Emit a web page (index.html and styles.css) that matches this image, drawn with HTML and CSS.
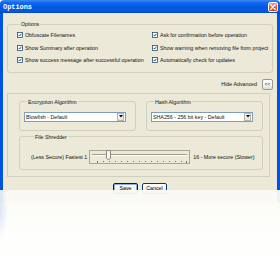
FILE: index.html
```html
<!DOCTYPE html>
<html>
<head>
<meta charset="utf-8">
<link rel="stylesheet" href="styles.css">
</head>
<body>
<div class="window">
  <div class="titlebar">
    <span class="title">Options</span>
    <span class="close"><svg width="6" height="6" viewBox="0 0 6 6"><path d="M0.8 0.8 L5.2 5.2 M5.2 0.8 L0.8 5.2" stroke="#fff" stroke-width="1.3" stroke-linecap="round"/></svg></span>
  </div>
  <div class="client">
    <fieldset class="group options">
      <legend>Options</legend>
      <div class="checks">
        <label class="check"><svg class="cb" viewBox="0 0 12 12"><rect x="1" y="1" width="10" height="10" fill="#fff" stroke="#1c5180" stroke-width="1.6"/><path d="M3.2 5.8 L5.2 8 L8.8 3.6" fill="none" stroke="#2a2a2a" stroke-width="1.7"/></svg><span>Obfuscate Filenames</span></label>
        <label class="check"><svg class="cb" viewBox="0 0 12 12"><rect x="1" y="1" width="10" height="10" fill="#fff" stroke="#1c5180" stroke-width="1.6"/><path d="M3.2 5.8 L5.2 8 L8.8 3.6" fill="none" stroke="#2a2a2a" stroke-width="1.7"/></svg><span>Ask for confirmation before operation</span></label>
        <label class="check"><svg class="cb" viewBox="0 0 12 12"><rect x="1" y="1" width="10" height="10" fill="#fff" stroke="#1c5180" stroke-width="1.6"/><path d="M3.2 5.8 L5.2 8 L8.8 3.6" fill="none" stroke="#2a2a2a" stroke-width="1.7"/></svg><span>Show Summary after operation</span></label>
        <label class="check"><svg class="cb" viewBox="0 0 12 12"><rect x="1" y="1" width="10" height="10" fill="#fff" stroke="#1c5180" stroke-width="1.6"/><path d="M3.2 5.8 L5.2 8 L8.8 3.6" fill="none" stroke="#2a2a2a" stroke-width="1.7"/></svg><span>Show warning when removing file from project</span></label>
        <label class="check"><svg class="cb" viewBox="0 0 12 12"><rect x="1" y="1" width="10" height="10" fill="#fff" stroke="#1c5180" stroke-width="1.6"/><path d="M3.2 5.8 L5.2 8 L8.8 3.6" fill="none" stroke="#2a2a2a" stroke-width="1.7"/></svg><span>Show success message after successful operation</span></label>
        <label class="check"><svg class="cb" viewBox="0 0 12 12"><rect x="1" y="1" width="10" height="10" fill="#fff" stroke="#1c5180" stroke-width="1.6"/><path d="M3.2 5.8 L5.2 8 L8.8 3.6" fill="none" stroke="#2a2a2a" stroke-width="1.7"/></svg><span>Automatically check for updates</span></label>
      </div>
    </fieldset>
    <div class="adv-row">
      <span>Hide Advanced</span>
      <span class="btn small">&lt;&lt;</span>
    </div>
    <div class="panel">
      <div class="algos">
        <fieldset class="group algo">
          <legend>Encryption Algorithm</legend>
          <div class="select"><span class="val">Blowfish - Default</span><span class="arrow"><svg width="4" height="3" viewBox="0 0 4 3"><path d="M0 0 H4 L2 2.5 Z" fill="#000"/></svg></span></div>
        </fieldset>
        <fieldset class="group algo">
          <legend>Hash Algorithm</legend>
          <div class="select"><span class="val">SHA256 - 256 bit key - Default</span><span class="arrow"><svg width="4" height="3" viewBox="0 0 4 3"><path d="M0 0 H4 L2 2.5 Z" fill="#000"/></svg></span></div>
        </fieldset>
      </div>
      <fieldset class="group shredder">
        <legend>File Shredder</legend>
        <div class="slider-row">
          <span class="lbl">(Less Secure) Fastest 1</span>
          <svg class="slider" width="101" height="14" viewBox="0 0 101 14">
            <rect x="0.5" y="0.5" width="100" height="13" fill="none" stroke="#a7a69a"/>
            <line x1="3" y1="4.5" x2="98" y2="4.5" stroke="#9d9c91"/>
            <line x1="3" y1="5.5" x2="98" y2="5.5" stroke="#fff"/>
            <g stroke="#6f6f6f">
              <line x1="8.5" y1="11" x2="8.5" y2="13"/><line x1="14.5" y1="11" x2="14.5" y2="12"/><line x1="20.5" y1="11" x2="20.5" y2="12"/><line x1="26.5" y1="11" x2="26.5" y2="12"/><line x1="32.5" y1="11" x2="32.5" y2="12"/><line x1="38.5" y1="11" x2="38.5" y2="12"/><line x1="44.5" y1="11" x2="44.5" y2="12"/><line x1="50.5" y1="11" x2="50.5" y2="12"/><line x1="56.5" y1="11" x2="56.5" y2="12"/><line x1="62.5" y1="11" x2="62.5" y2="12"/><line x1="68.5" y1="11" x2="68.5" y2="12"/><line x1="74.5" y1="11" x2="74.5" y2="12"/><line x1="80.5" y1="11" x2="80.5" y2="12"/><line x1="86.5" y1="11" x2="86.5" y2="12"/><line x1="92.5" y1="11" x2="92.5" y2="12"/><line x1="97.5" y1="11" x2="97.5" y2="13"/>
            </g>
            <path d="M17.5 0.5 H21.5 V8 L19.5 10 L17.5 8 Z" fill="#f4f3ee" stroke="#8a8a80"/>
            <line x1="18.5" y1="2" x2="18.5" y2="8" stroke="#fff"/>
          </svg>
          <span class="lbl">16 - More secure (Slower)</span>
        </div>
      </fieldset>
    </div>
    <div class="buttons">
      <span class="btn default">Save</span>
      <span class="btn">Cancel</span>
    </div>
  </div>
</div>
<div class="fade"></div>
</body>
</html>
```
FILE: styles.css
```css
html, body {
  margin: 0;
  padding: 0;
}
body {
  width: 280px;
  height: 270px;
  overflow: hidden;
  background: #fff;
  position: relative;
  font-family: "Liberation Sans", Arial, sans-serif;
  font-size: 5.3px;
  color: #111;
}
.window {
  width: 280px;
}
.titlebar {
  height: 13px;
  box-sizing: border-box;
  display: flex;
  align-items: center;
  justify-content: space-between;
  padding: 0 2px 0 3px;
  background: linear-gradient(#3d8cf7 0%, #1667ea 20%, #0058e6 55%, #0a5ad8 85%, #0048c6 100%);
  border-radius: 4px 4px 0 0;
}
.title {
  font-family: "Liberation Mono", monospace;
  font-weight: bold;
  font-size: 6.9px;
  color: #fff;
}
.close {
  width: 10px;
  height: 10px;
  box-sizing: border-box;
  border: 1px solid #fff;
  border-radius: 2px;
  background: linear-gradient(#f39a7a, #e35a34 55%, #cc4420);
  display: flex;
  align-items: center;
  justify-content: center;
}
.client {
  background: #ece9d8;
  border-left: 3px solid #0053e0;
  border-right: 3px solid #0053e0;
  height: 190px;
  box-sizing: border-box;
  padding-top: 8px;
}
.group {
  margin: 0;
  border: 1px solid #d0d0bf;
  border-radius: 3px;
  min-width: 0;
}
.group legend {
  padding: 0 1px;
  margin-left: 3px;
  line-height: 6px;
  height: 6px;
  font-size: 5.3px;
}
.options {
  margin: 0 4px 0 4px;
  padding: 2px 4px 5px 9px;
}
.checks {
  display: grid;
  grid-template-columns: 135px 1fr;
  grid-auto-rows: 12.5px;
}
.check {
  display: flex;
  align-items: center;
  gap: 2px;
  white-space: nowrap;
}
.cb {
  width: 6px;
  height: 6px;
  flex: none;
}
.adv-row {
  margin: 6px 4px 0 0;
  height: 11px;
  display: flex;
  align-items: center;
  justify-content: flex-end;
  gap: 5px;
}
.btn {
  display: inline-flex;
  align-items: center;
  justify-content: center;
  box-sizing: border-box;
  border: 1px solid #003c74;
  border-radius: 2px;
  background: linear-gradient(#ffffff, #f4f3ee 60%, #dcd9cc);
  font-size: 5.3px;
  color: #000;
}
.btn.small {
  width: 11px;
  height: 11px;
  border-color: #9a9a90;
  font-size: 4.5px;
}
.panel {
  margin: 3px 7px 0 4px;
  border: 1px solid #d0d0bf;
  padding: 5px 6px 6px 11px;
}
.algos {
  display: flex;
  gap: 10px;
}
.algo {
  width: 117px;
  box-sizing: border-box;
  padding: 7px 4px 8px 4px;
}
.select {
  width: 102px;
  height: 10px;
  box-sizing: border-box;
  border: 1px solid #7f9db9;
  background: #fff;
  display: flex;
  align-items: center;
  justify-content: space-between;
  padding: 0 1px 0 1px;
}
.val {
  white-space: nowrap;
}
.arrow {
  width: 7px;
  height: 8px;
  box-sizing: border-box;
  border: 1px solid #b5b3a8;
  background: linear-gradient(#fbfbf8, #e6e4da);
  display: flex;
  align-items: center;
  justify-content: center;
}
.shredder {
  margin-top: 3px;
  padding: 10px 4px 5px 11px;
}
.slider-row {
  display: flex;
  align-items: center;
  height: 14px;
}
.slider-row .lbl {
  white-space: nowrap;
}
.slider {
  flex: none;
  margin: 0 3px 0 2px;
  display: block;
}
.buttons {
  margin-top: 6px;
  display: flex;
  justify-content: center;
  gap: 4px;
}
.buttons .btn {
  width: 25px;
  height: 11px;
}
.btn.default {
  border: 1px solid #1a1a1a;
  box-shadow: inset 0 0 0 1px #8aaee8;
}
.fade {
  position: absolute;
  left: 0;
  top: 190px;
  width: 280px;
  height: 80px;
  background:
    radial-gradient(ellipse 8px 30px at 0px 20px, rgba(120, 160, 240, 0.25), rgba(120, 160, 240, 0)),
    linear-gradient(rgba(250, 249, 244, 0.94), rgba(253, 253, 250, 0.98) 40%, #ffffff 100%);
}
```
